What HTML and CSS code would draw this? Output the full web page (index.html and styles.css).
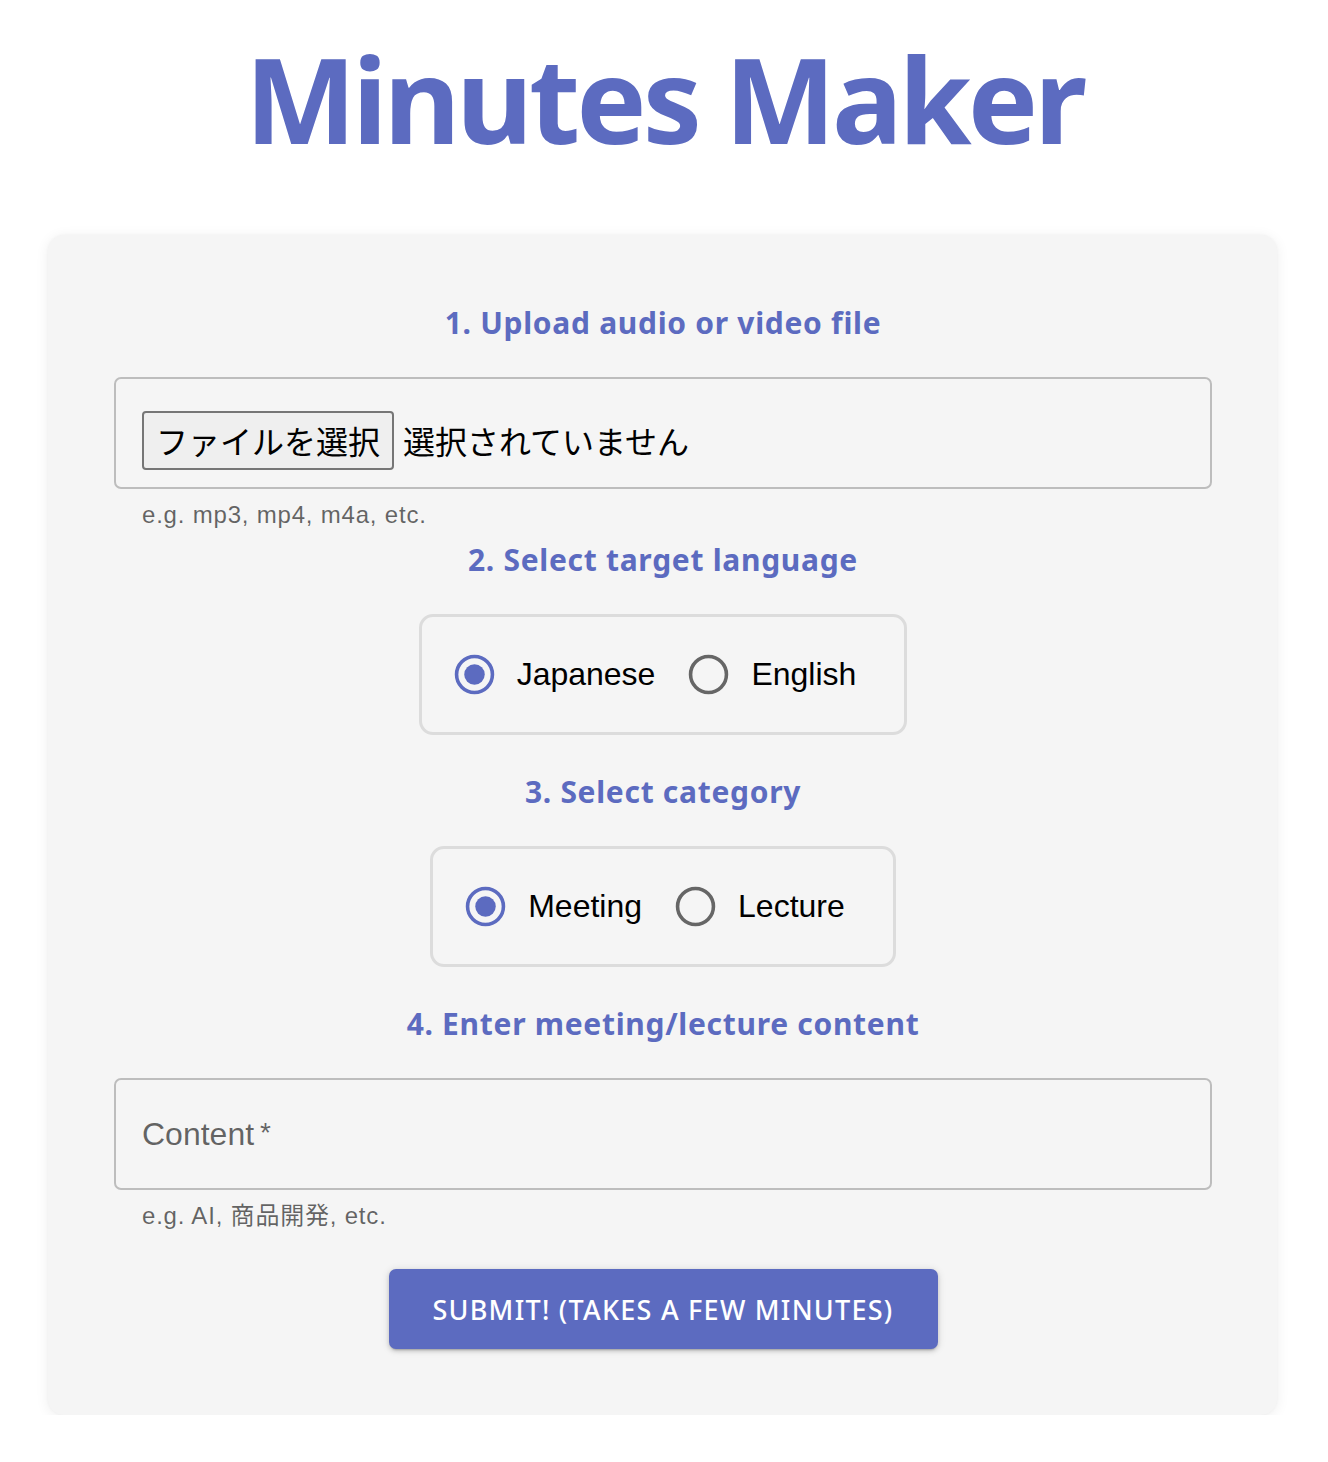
FILE: index.html
```html
<!DOCTYPE html>
<html lang="ja">
<head>
<meta charset="utf-8">
<title>Minutes Maker</title>
<link rel="stylesheet" href="styles.css">
</head>
<body>
<h1 class="title">Minutes Maker</h1>
<main class="card">
  <h2 class="step">1. Upload audio or video file</h2>
  <div class="field file-field">
    <span class="file-btn">ファイルを選択</span>
    <span class="file-name">選択されていません</span>
  </div>
  <p class="helper">e.g. mp3, mp4, m4a, etc.</p>

  <h2 class="step">2. Select target language</h2>
  <div class="radio-group">
    <label class="radio">
      <svg class="radio-icon" viewBox="0 0 40 40"><circle cx="20" cy="20" r="17.5" fill="none" stroke="#5c6bc0" stroke-width="3.5"/><circle cx="20" cy="20" r="10" fill="#5c6bc0"/></svg>
      <span class="radio-label">Japanese</span>
    </label>
    <label class="radio">
      <svg class="radio-icon" viewBox="0 0 40 40"><circle cx="20" cy="20" r="17.5" fill="none" stroke="#666" stroke-width="3.5"/></svg>
      <span class="radio-label">English</span>
    </label>
  </div>

  <h2 class="step">3. Select category</h2>
  <div class="radio-group">
    <label class="radio">
      <svg class="radio-icon" viewBox="0 0 40 40"><circle cx="20" cy="20" r="17.5" fill="none" stroke="#5c6bc0" stroke-width="3.5"/><circle cx="20" cy="20" r="10" fill="#5c6bc0"/></svg>
      <span class="radio-label">Meeting</span>
    </label>
    <label class="radio">
      <svg class="radio-icon" viewBox="0 0 40 40"><circle cx="20" cy="20" r="17.5" fill="none" stroke="#666" stroke-width="3.5"/></svg>
      <span class="radio-label">Lecture</span>
    </label>
  </div>

  <h2 class="step">4. Enter meeting/lecture content</h2>
  <div class="field text-field">
    <span class="placeholder">Content<span class="req">*</span></span>
  </div>
  <p class="helper">e.g. AI, 商品開発, etc.</p>

  <button class="submit" type="button">Submit! (takes a few minutes)</button>
</main>
</body>
</html>
```
FILE: styles.css
```css
* { box-sizing: border-box; }
body {
  margin: 0;
  background: #fff;
  font-family: "Liberation Sans", Arial, "Noto Sans CJK JP", sans-serif;
}
.title {
  margin: 40px 0 77px;
  text-align: center;
  font-family: "Noto Sans", sans-serif;
  font-weight: 700;
  font-size: 118px;
  line-height: 118px;
  color: #5c6bc0;
  letter-spacing: -4px;
}
.card {
  margin: 0 51px 0 48px;
  background: #f5f5f5;
  border-radius: 16px;
  box-shadow: 0 2px 14px rgba(0,0,0,0.07), 0 0 3px rgba(0,0,0,0.04);
  padding: 70px 65px 66px 66px;
  display: flex;
  flex-direction: column;
  align-items: center;
}
.step {
  margin: 0 0 36px;
  font-family: "Noto Sans", sans-serif;
  font-weight: 700;
  font-size: 30px;
  line-height: 36px;
  letter-spacing: 0.7px;
  color: #5c6bc0;
}
.field {
  align-self: stretch;
  height: 112px;
  border: 2px solid #bdbdbd;
  border-radius: 7px;
  display: flex;
  align-items: center;
  padding-left: 26px;
}
.file-field { padding-top: 14px; }
.file-btn {
  height: 59px;
  padding: 0 12px;
  display: flex;
  align-items: center;
  border: 2px solid #767676;
  border-radius: 4px;
  background: #efefef;
  font-family: "Noto Sans CJK JP", sans-serif;
  font-size: 32px;
  color: #000;
}
.file-name {
  margin-left: 9px;
  font-family: "Noto Sans CJK JP", sans-serif;
  font-size: 32px;
  color: #000;
}
.helper {
  align-self: stretch;
  margin: 13px 0 14px;
  padding-left: 28px;
  font-size: 24px;
  line-height: 26px;
  letter-spacing: 0.8px;
  color: rgba(0,0,0,0.6);
}
.radio-group {
  display: flex;
  align-items: center;
  height: 121px;
  border: 3px solid #dcdcdc;
  border-radius: 14px;
  padding: 0 48px 0 32px;
  gap: 33px;
  margin-bottom: 39px;
}
.radio {
  display: flex;
  align-items: center;
  gap: 22px;
}
.radio-icon {
  width: 41px;
  height: 41px;
  display: block;
}
.radio-label {
  font-size: 32px;
  color: #000;
}
.placeholder {
  font-size: 32px;
  color: rgba(0,0,0,0.6);
}
.req {
  margin-left: 6px;
  font-size: 28px;
  vertical-align: 3px;
}
.submit {
  margin-top: 26px;
  width: 549px;
  height: 80px;
  border: 0;
  border-radius: 7px;
  background: #5c6bc0;
  color: #fff;
  font-family: "Noto Sans", sans-serif;
  font-weight: 500;
  font-size: 27px;
  letter-spacing: 1.25px;
  text-transform: uppercase;
  box-shadow: 0 3px 2px -2px rgba(0,0,0,0.2), 0 2px 4px rgba(0,0,0,0.14), 0 1px 8px rgba(0,0,0,0.12);
}
```
